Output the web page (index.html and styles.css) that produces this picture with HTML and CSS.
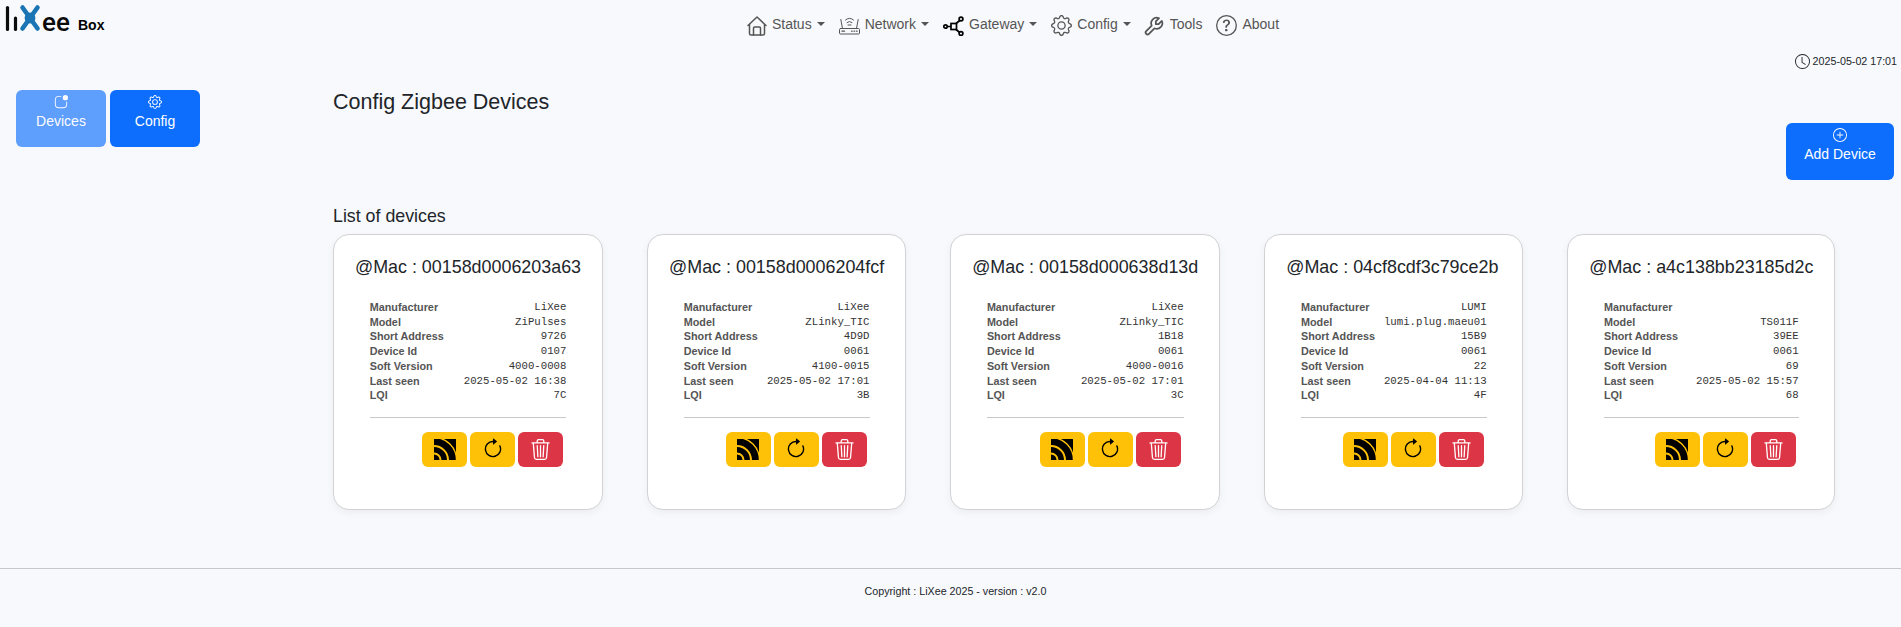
FILE: index.html
```html
<!DOCTYPE html>
<html lang="en">
<head>
  <meta charset="UTF-8">
  <meta name="viewport" content="width=device-width, initial-scale=1.0">
  <title>LiXee Box - Config Zigbee Devices</title>
  <link rel="stylesheet" href="styles.css">
</head>
<body>
  <svg class="icon-defs" aria-hidden="true">
    <symbol id="i-gear" viewBox="0 0 16 16">
      <path fill="currentColor" d="M8 4.754a3.246 3.246 0 1 0 0 6.492 3.246 3.246 0 0 0 0-6.492M5.754 8a2.246 2.246 0 1 1 4.492 0 2.246 2.246 0 0 1-4.492 0"/>
      <path fill="currentColor" d="M9.796 1.343c-.527-1.79-3.065-1.79-3.592 0l-.094.319a.873.873 0 0 1-1.255.52l-.292-.16c-1.64-.892-3.433.902-2.54 2.541l.159.292a.873.873 0 0 1-.52 1.255l-.319.094c-1.79.527-1.79 3.065 0 3.592l.319.094a.873.873 0 0 1 .52 1.255l-.16.292c-.892 1.64.901 3.434 2.541 2.54l.292-.159a.873.873 0 0 1 1.255.52l.094.319c.527 1.79 3.065 1.79 3.592 0l.094-.319a.873.873 0 0 1 1.255-.52l.292.16c1.64.893 3.434-.902 2.54-2.541l-.159-.292a.873.873 0 0 1 .52-1.255l.319-.094c1.79-.527 1.79-3.065 0-3.592l-.319-.094a.873.873 0 0 1-.52-1.255l.16-.292c.893-1.64-.902-3.433-2.541-2.54l-.292.159a.873.873 0 0 1-1.255-.52zm-2.633.283c.246-.835 1.428-.835 1.674 0l.094.319a1.873 1.873 0 0 0 2.693 1.115l.291-.16c.764-.415 1.6.42 1.184 1.185l-.159.292a1.873 1.873 0 0 0 1.116 2.692l.318.094c.835.246.835 1.428 0 1.674l-.319.094a1.873 1.873 0 0 0-1.115 2.693l.16.291c.415.764-.42 1.6-1.185 1.184l-.291-.159a1.873 1.873 0 0 0-2.693 1.116l-.094.318c-.246.835-1.428.835-1.674 0l-.094-.319a1.873 1.873 0 0 0-2.692-1.115l-.292.16c-.764.415-1.6-.42-1.184-1.185l.159-.291A1.873 1.873 0 0 0 1.945 8.93l-.319-.094c-.835-.246-.835-1.428 0-1.674l.319-.094A1.873 1.873 0 0 0 3.06 4.377l-.16-.292c-.415-.764.42-1.6 1.185-1.184l.292.159a1.873 1.873 0 0 0 2.692-1.115z"/>
    </symbol>
    <symbol id="i-signal" viewBox="0 0 22 21">
      <rect width="22" height="21" fill="#000"/>
      <g fill="none" stroke="#ffc107">
        <circle cx="0" cy="21" r="6.500" stroke-width="2"/>
        <circle cx="0" cy="21" r="14" stroke-width="2"/>
        <circle cx="0" cy="21" r="22.500" stroke-width="1.400"/>
      </g>
    </symbol>
    <symbol id="i-refresh" viewBox="0 0 16 16">
      <path fill="#000" fill-rule="evenodd" d="M8 3a5 5 0 1 0 4.546 2.914.5.5 0 0 1 .908-.417A6 6 0 1 1 8 2z"/>
      <path fill="#000" d="M8 4.466V.534a.25.25 0 0 1 .41-.192l2.36 1.966c.12.1.12.284 0 .384L8.41 4.658A.25.25 0 0 1 8 4.466"/>
    </symbol>
    <symbol id="i-trash" viewBox="0 0 16 16">
      <path fill="#fff" d="M6.5 1h3a.5.5 0 0 1 .5.5v1H6v-1a.5.5 0 0 1 .5-.5M11 2.5v-1A1.5 1.5 0 0 0 9.5 0h-3A1.5 1.5 0 0 0 5 1.5v1H1.5a.5.5 0 0 0 0 1h.538l.853 10.66A2 2 0 0 0 4.885 16h6.23a2 2 0 0 0 1.994-1.84l.853-10.66h.538a.5.5 0 0 0 0-1zm1.958 1-.846 10.58a1 1 0 0 1-.997.92h-6.23a1 1 0 0 1-.997-.92L3.042 3.5zm-7.487 1a.5.5 0 0 1 .528.47l.5 8.5a.5.5 0 0 1-.998.06L5 5.03a.5.5 0 0 1 .47-.53Zm5.058 0a.5.5 0 0 1 .47.53l-.5 8.5a.5.5 0 1 1-.998-.06l.5-8.5a.5.5 0 0 1 .528-.47M8 4.5a.5.5 0 0 1 .5.5v8.5a.5.5 0 0 1-1 0V5a.5.5 0 0 1 .5-.5"/>
    </symbol>
  </svg>

  <header class="topbar">
    <div class="brand">
      <svg class="logo" viewBox="0 0 72 36" width="72" height="36" aria-label="LiXee">
        <g stroke="#0b0b0b" stroke-width="3.200" stroke-linecap="round">
          <line x1="7.500" y1="7.500" x2="7.500" y2="29.500"/>
          <line x1="15.500" y1="18" x2="15.500" y2="29.500"/>
        </g>
        <g stroke="#1b75b4" stroke-width="4.600" stroke-linecap="round">
          <line x1="22.500" y1="7.500" x2="37.500" y2="28.500"/>
          <line x1="37.500" y1="7.500" x2="22.500" y2="28.500"/>
        </g>
        <circle cx="30" cy="18" r="5.400" fill="#1b75b4"/>
        <text class="logo-ee" x="42" y="31">ee</text>
      </svg>
      <span class="brand-name">Box</span>
    </div>
    <nav class="menu">
      <a class="menu-item" href="#">
        <svg class="menu-icon" width="20" height="20" viewBox="0 0 20 20" fill="none" stroke="currentColor" stroke-width="1.500" stroke-linejoin="round" stroke-linecap="round">
          <path d="M1 9.500 10 1l9 8.500"/>
          <path d="M2.500 8.500V17.500a1.500 1.500 0 0 0 1.500 1.500h12a1.500 1.500 0 0 0 1.500-1.500V8.500"/>
          <path d="M6.500 19v-7a1 1 0 0 1 1-1h5a1 1 0 0 1 1 1v7"/>
        </svg>
        <span class="menu-label">Status</span><i class="caret"></i>
      </a>
      <a class="menu-item" href="#">
        <svg class="menu-icon" width="21" height="20" viewBox="0 0 21 20" fill="none" stroke="currentColor" stroke-width="1" stroke-linecap="round">
          <rect x="0.500" y="12.500" width="20" height="5.500" rx="1"/>
          <path d="M3.500 12.500 1.800 3.500M17.500 12.500l1.700-9"/>
          <path d="M6.500 4Q10.500 0.500 14.500 4M8 6.500Q10.500 4.500 13 6.500"/>
          <path d="M9 9h3"/>
          <path d="M3 15.200h2.500M12.500 15.200h.6M15 15.200h.6M17.500 15.200h.6" stroke-width="1.300"/>
        </svg>
        <span class="menu-label">Network</span><i class="caret"></i>
      </a>
      <a class="menu-item" href="#">
        <svg class="menu-icon icon-dark" width="21" height="20" viewBox="0 0 21 20" fill="none" stroke="currentColor" stroke-width="1.700">
          <circle cx="2.500" cy="10.500" r="1.700"/>
          <circle cx="18" cy="3" r="1.900"/>
          <circle cx="18" cy="17.500" r="1.900"/>
          <rect x="8" y="7.500" width="5.500" height="6"/>
          <path d="M4.200 10.500H8M13 7.500l3.800-3M13 13.500l3.800 3"/>
        </svg>
        <span class="menu-label">Gateway</span><i class="caret"></i>
      </a>
      <a class="menu-item" href="#">
        <svg class="menu-icon" width="21" height="21"><use href="#i-gear"/></svg>
        <span class="menu-label">Config</span><i class="caret"></i>
      </a>
      <a class="menu-item menu-tools" href="#">
        <svg class="menu-icon" width="22" height="22" viewBox="0 0 24 24" fill="none" stroke="currentColor" stroke-width="1.900" stroke-linecap="round" stroke-linejoin="round">
          <path transform="translate(24 0) scale(-1 1)" d="M7 10h3v-3l-3.500 -3.500a6 6 0 0 1 8 8l6 6a2 2 0 0 1 -3 3l-6 -6a6 6 0 0 1 -8 -8l3.500 3.500"/>
        </svg>
        <span class="menu-label">Tools</span>
      </a>
      <a class="menu-item" href="#">
        <svg class="menu-icon" width="21" height="21" viewBox="0 0 16 16" fill="currentColor">
          <path d="M8 15A7 7 0 1 1 8 1a7 7 0 0 1 0 14m0 1A8 8 0 1 0 8 0a8 8 0 0 0 0 16"/>
          <path d="M5.255 5.786a.237.237 0 0 0 .241.247h.825c.138 0 .248-.113.266-.25.09-.656.54-1.134 1.342-1.134.686 0 1.314.343 1.314 1.168 0 .635-.374.927-.965 1.371-.673.489-1.206 1.06-1.168 1.987l.003.217a.25.25 0 0 0 .25.246h.811a.25.25 0 0 0 .25-.25v-.105c0-.718.273-.927 1.01-1.486.609-.463 1.244-.977 1.244-2.056 0-1.511-1.276-2.241-2.673-2.241-1.267 0-2.655.59-2.75 2.286m1.557 5.763c0 .533.425.927 1.01.927.609 0 1.028-.394 1.028-.927 0-.552-.42-.94-1.029-.94-.584 0-1.009.388-1.009.94"/>
        </svg>
        <span class="menu-label">About</span>
      </a>
    </nav>
  </header>

  <div class="clock">
    <svg width="15" height="15" viewBox="0 0 16 16" fill="currentColor">
      <path d="M8 3.500a.5.5 0 0 0-1 0V9a.5.5 0 0 0 .252.434l3.500 2a.5.5 0 0 0 .496-.868L8 8.710z"/>
      <path d="M8 16A8 8 0 1 0 8 0a8 8 0 0 0 0 16m7-8A7 7 0 1 1 1 8a7 7 0 0 1 14 0"/>
    </svg>
    <span>2025-05-02 17:01</span>
  </div>

  <div class="page">
    <aside class="sidebar">
      <button class="btn-main btn-active">
        <svg width="14" height="14" viewBox="0 0 16 16" fill="currentColor">
          <path d="M5.500 2A3.500 3.500 0 0 0 2 5.500v5A3.500 3.500 0 0 0 5.500 14h5a3.500 3.500 0 0 0 3.500-3.500V8a.5.5 0 0 1 1 0v2.500a4.500 4.500 0 0 1-4.500 4.500h-5A4.500 4.500 0 0 1 1 10.500v-5A4.500 4.500 0 0 1 5.500 1H8a.5.5 0 0 1 0 1z"/>
          <path d="M16 3a3 3 0 1 1-6 0 3 3 0 0 1 6 0"/>
        </svg>
        Devices
      </button>
      <button class="btn-main">
        <svg width="14" height="14"><use href="#i-gear"/></svg>
        Config
      </button>
    </aside>

    <main class="content">
      <h2 class="page-title">Config Zigbee Devices</h2>
      <div class="toolbar">
        <button class="btn-main btn-add">
          <svg width="14" height="14" viewBox="0 0 16 16" fill="currentColor">
            <path d="M8 15A7 7 0 1 1 8 1a7 7 0 0 1 0 14m0 1A8 8 0 1 0 8 0a8 8 0 0 0 0 16"/>
            <path d="M8 4a.5.5 0 0 1 .5.5v3h3a.5.5 0 0 1 0 1h-3v3a.5.5 0 0 1-1 0v-3h-3a.5.5 0 0 1 0-1h3v-3A.5.5 0 0 1 8 4"/>
          </svg>
          Add Device
        </button>
      </div>
      <h3 class="list-title">List of devices</h3>

      <div class="device-list">
        <section class="device-card">
          <h4 class="device-mac">@Mac : 00158d0006203a63</h4>
          <div class="device-body">
            <table class="device-info">
              <tr><th>Manufacturer</th><td>LiXee</td></tr>
              <tr><th>Model</th><td>ZiPulses</td></tr>
              <tr><th>Short Address</th><td>9726</td></tr>
              <tr><th>Device Id</th><td>0107</td></tr>
              <tr><th>Soft Version</th><td>4000-0008</td></tr>
              <tr><th>Last seen</th><td>2025-05-02 16:38</td></tr>
              <tr><th>LQI</th><td>7C</td></tr>
            </table>
            <hr class="device-sep">
            <div class="device-actions">
              <button class="btn-icon btn-warn"><svg width="22" height="21"><use href="#i-signal"/></svg></button>
              <button class="btn-icon btn-warn"><svg width="22" height="22"><use href="#i-refresh"/></svg></button>
              <button class="btn-icon btn-del"><svg width="21" height="21"><use href="#i-trash"/></svg></button>
            </div>
          </div>
        </section>

        <section class="device-card">
          <h4 class="device-mac">@Mac : 00158d0006204fcf</h4>
          <div class="device-body">
            <table class="device-info">
              <tr><th>Manufacturer</th><td>LiXee</td></tr>
              <tr><th>Model</th><td>ZLinky_TIC</td></tr>
              <tr><th>Short Address</th><td>4D9D</td></tr>
              <tr><th>Device Id</th><td>0061</td></tr>
              <tr><th>Soft Version</th><td>4100-0015</td></tr>
              <tr><th>Last seen</th><td>2025-05-02 17:01</td></tr>
              <tr><th>LQI</th><td>3B</td></tr>
            </table>
            <hr class="device-sep">
            <div class="device-actions">
              <button class="btn-icon btn-warn"><svg width="22" height="21"><use href="#i-signal"/></svg></button>
              <button class="btn-icon btn-warn"><svg width="22" height="22"><use href="#i-refresh"/></svg></button>
              <button class="btn-icon btn-del"><svg width="21" height="21"><use href="#i-trash"/></svg></button>
            </div>
          </div>
        </section>

        <section class="device-card">
          <h4 class="device-mac">@Mac : 00158d000638d13d</h4>
          <div class="device-body">
            <table class="device-info">
              <tr><th>Manufacturer</th><td>LiXee</td></tr>
              <tr><th>Model</th><td>ZLinky_TIC</td></tr>
              <tr><th>Short Address</th><td>1B18</td></tr>
              <tr><th>Device Id</th><td>0061</td></tr>
              <tr><th>Soft Version</th><td>4000-0016</td></tr>
              <tr><th>Last seen</th><td>2025-05-02 17:01</td></tr>
              <tr><th>LQI</th><td>3C</td></tr>
            </table>
            <hr class="device-sep">
            <div class="device-actions">
              <button class="btn-icon btn-warn"><svg width="22" height="21"><use href="#i-signal"/></svg></button>
              <button class="btn-icon btn-warn"><svg width="22" height="22"><use href="#i-refresh"/></svg></button>
              <button class="btn-icon btn-del"><svg width="21" height="21"><use href="#i-trash"/></svg></button>
            </div>
          </div>
        </section>

        <section class="device-card">
          <h4 class="device-mac">@Mac : 04cf8cdf3c79ce2b</h4>
          <div class="device-body">
            <table class="device-info">
              <tr><th>Manufacturer</th><td>LUMI</td></tr>
              <tr><th>Model</th><td>lumi.plug.maeu01</td></tr>
              <tr><th>Short Address</th><td>15B9</td></tr>
              <tr><th>Device Id</th><td>0061</td></tr>
              <tr><th>Soft Version</th><td>22</td></tr>
              <tr><th>Last seen</th><td>2025-04-04 11:13</td></tr>
              <tr><th>LQI</th><td>4F</td></tr>
            </table>
            <hr class="device-sep">
            <div class="device-actions">
              <button class="btn-icon btn-warn"><svg width="22" height="21"><use href="#i-signal"/></svg></button>
              <button class="btn-icon btn-warn"><svg width="22" height="22"><use href="#i-refresh"/></svg></button>
              <button class="btn-icon btn-del"><svg width="21" height="21"><use href="#i-trash"/></svg></button>
            </div>
          </div>
        </section>

        <section class="device-card">
          <h4 class="device-mac">@Mac : a4c138bb23185d2c</h4>
          <div class="device-body">
            <table class="device-info">
              <tr><th>Manufacturer</th><td></td></tr>
              <tr><th>Model</th><td>TS011F</td></tr>
              <tr><th>Short Address</th><td>39EE</td></tr>
              <tr><th>Device Id</th><td>0061</td></tr>
              <tr><th>Soft Version</th><td>69</td></tr>
              <tr><th>Last seen</th><td>2025-05-02 15:57</td></tr>
              <tr><th>LQI</th><td>68</td></tr>
            </table>
            <hr class="device-sep">
            <div class="device-actions">
              <button class="btn-icon btn-warn"><svg width="22" height="21"><use href="#i-signal"/></svg></button>
              <button class="btn-icon btn-warn"><svg width="22" height="22"><use href="#i-refresh"/></svg></button>
              <button class="btn-icon btn-del"><svg width="21" height="21"><use href="#i-trash"/></svg></button>
            </div>
          </div>
        </section>
      </div>
    </main>
  </div>

  <footer class="footer">Copyright : LiXee 2025 - version : v2.0</footer>
</body>
</html>
```

FILE: styles.css
```css
body {
  margin: 0;
  font-family: "Liberation Sans", Arial, sans-serif;
  font-size: 14px;
  background-color: #f8f9fd;
  color: #212529;
}
.icon-defs {
  display: none;
}

/* top bar */
.topbar {
  display: flex;
  height: 44px;
}
.brand {
  display: flex;
  width: 125px;
  flex-shrink: 0;
}
.logo {
  display: block;
  margin-right: 6px;
}
.logo-ee {
  font-family: Roboto, sans-serif;
  font-size: 26px;
  font-weight: 500;
  fill: #0b0b0b;
}
.brand-name {
  margin-top: 17px;
  font-size: 14px;
  line-height: 16px;
  font-weight: bold;
  color: #000;
}
.menu {
  flex: 1;
  display: flex;
  justify-content: center;
  align-items: center;
  gap: 14px;
  padding-top: 7px;
}
.menu-item {
  display: flex;
  align-items: center;
  gap: 5px;
  color: #555;
  text-decoration: none;
}
.menu-label {
  margin-top: -3px;
}
.menu-tools {
  margin-left: -2px;
}
.menu-icon {
  display: block;
}
.icon-dark {
  color: #000;
}
.caret {
  display: block;
  margin-top: -3px;
  border-top: 4px solid #555;
  border-left: 4px solid transparent;
  border-right: 4px solid transparent;
}
.clock {
  display: flex;
  justify-content: flex-end;
  align-items: center;
  gap: 3px;
  height: 14px;
  margin-top: 10px;
  padding-right: 4px;
  font-size: 10.7px;
}

/* layout */
.page {
  display: flex;
  margin-top: 22px;
}
.sidebar {
  display: flex;
  align-items: flex-start;
  gap: 4px;
  width: 317px;
  padding-left: 16px;
  flex-shrink: 0;
}
.content {
  flex: 1;
  padding-right: 7px;
}
.btn-main {
  display: flex;
  flex-direction: column;
  align-items: center;
  gap: 2px;
  width: 90px;
  height: 57px;
  padding: 5px 0 0;
  border: none;
  border-radius: 6px;
  background-color: #0d6efd;
  color: #fff;
  font-family: inherit;
  font-size: 14px;
  line-height: 20px;
  cursor: pointer;
}
.btn-active {
  opacity: .65;
}
.btn-add {
  width: 108px;
}
.page-title {
  margin: 0;
  font-size: 21.5px;
  line-height: 24px;
  font-weight: normal;
}
.toolbar {
  display: flex;
  justify-content: flex-end;
  margin-top: 9px;
}
.list-title {
  margin: 25px 0 7px;
  font-size: 17.8px;
  line-height: 22px;
  font-weight: normal;
}

/* device cards */
.device-list {
  display: flex;
  gap: 44px;
}
.device-card {
  box-sizing: border-box;
  min-width: 259px;
  height: 276px;
  padding: 21px 21px 0;
  border: 1px solid #d2d2d6;
  border-radius: 16px;
  background-color: #fff;
  box-shadow: 0 3px 8px rgba(0, 0, 0, .05);
}
.device-mac {
  margin: 0 0 21px;
  font-size: 17.9px;
  line-height: 23px;
  font-weight: normal;
  white-space: nowrap;
}
.device-body {
  padding: 0 14.7px;
}
.device-info {
  width: 100%;
  border-collapse: collapse;
  font-size: 10.8px;
}
.device-info th {
  padding: 0;
  height: 14.7px;
  line-height: 14.7px;
  text-align: left;
  color: #555;
  font-weight: bold;
}
.device-info td {
  padding: 0;
  line-height: 14.7px;
  text-align: right;
  font-family: "Liberation Mono", "Courier New", monospace;
  font-size: 10.7px;
  color: #333;
  white-space: nowrap;
}
.device-sep {
  margin: 14px 0;
  height: 1px;
  border: none;
  background-color: #c8c8c8;
}
.device-actions {
  display: flex;
  justify-content: flex-end;
  gap: 3px;
  padding-right: 3px;
}
.btn-icon {
  display: flex;
  justify-content: center;
  align-items: center;
  width: 45px;
  height: 35px;
  padding: 0;
  border: none;
  border-radius: 6px;
  cursor: pointer;
}
.btn-warn {
  background-color: #ffc107;
}
.btn-del {
  background-color: #dc3545;
}

.footer {
  margin-top: 58px;
  padding: 16px 0 30px 10px;
  border-top: 1px solid #c6c6cb;
  text-align: center;
  font-size: 10.7px;
  line-height: 13px;
}
```
